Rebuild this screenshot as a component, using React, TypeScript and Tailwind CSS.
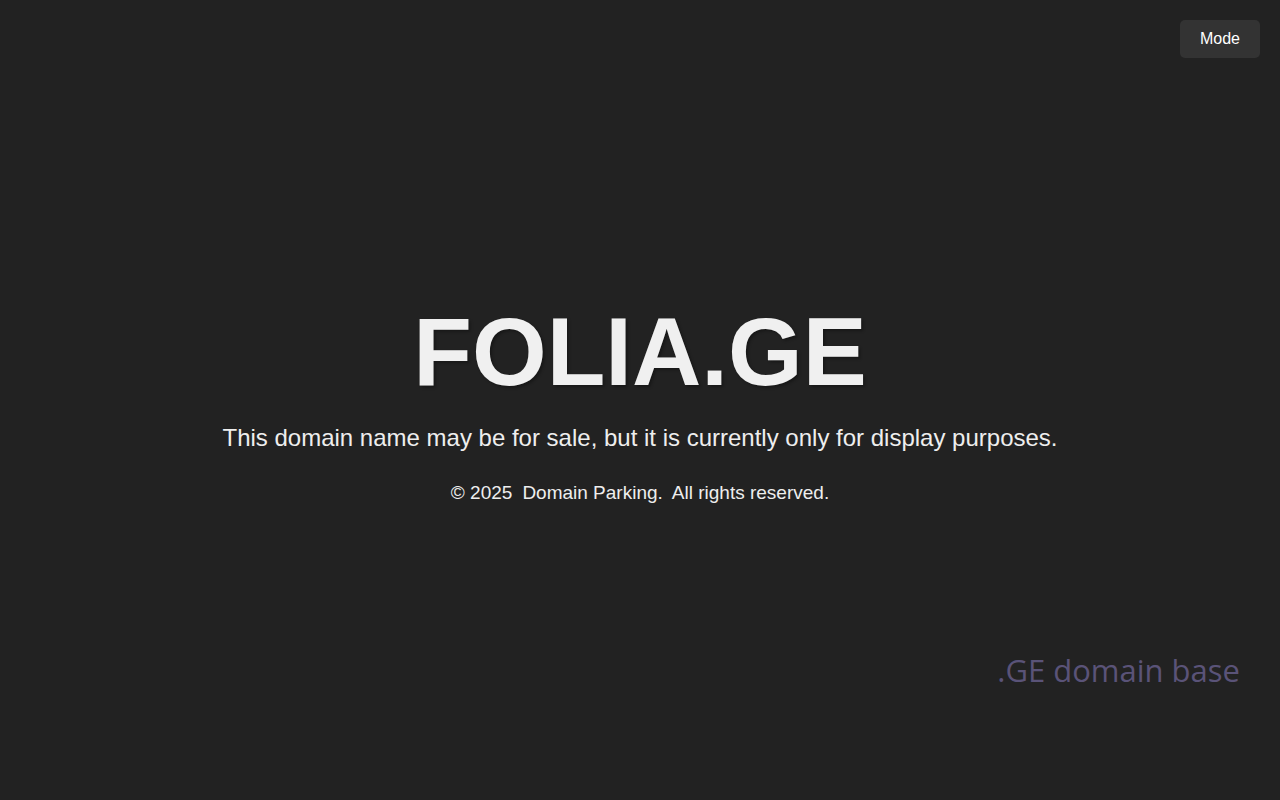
import React from "react";

const App = () => {
  return (
    <div className="relative min-h-screen bg-[#222222] font-['Liberation_Sans',Arial,sans-serif] text-[#eeeeee]">
      <button className="absolute right-5 top-5 h-[38px] w-20 rounded-[5px] bg-[#333333] text-base text-white">
        Mode
      </button>

      <div className="flex min-h-screen flex-col items-center justify-center">
        <h1 className="text-[96px] font-bold leading-[110px] text-[#f0f0f0] [text-shadow:2px_2px_3px_rgba(0,0,0,0.3)]">
          FOLIA.GE
        </h1>
        <p className="mt-[17px] text-[24px] leading-[28px]">
          This domain name may be for sale, but it is currently only for display purposes.
        </p>
        <p className="mt-[30px] text-[19px] leading-[22px]">
          <span>© 2025</span>
          <span className="ml-[10px]">Domain Parking.</span>
          <span className="ml-[9px]">All rights reserved.</span>
        </p>
      </div>

      <div className="absolute right-10 top-[648px] font-['Open_Sans',sans-serif] text-[31px] leading-[44px] text-[#5a5378]">
        .GE domain base
      </div>
    </div>
  );
};

export default App;
